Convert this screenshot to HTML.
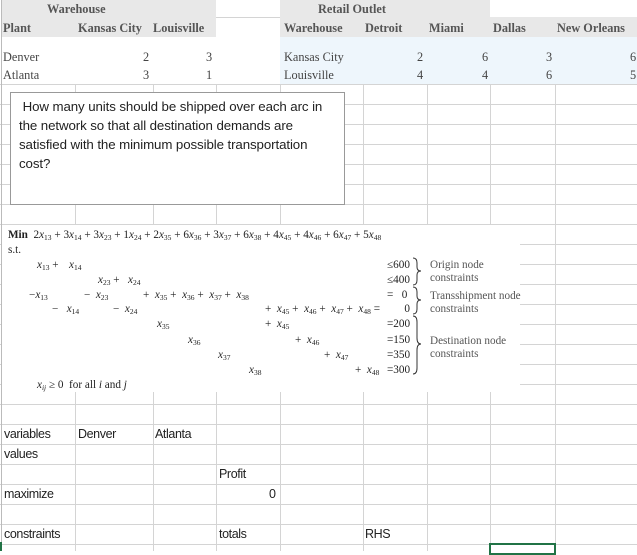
<!DOCTYPE html>
<html><head><meta charset="utf-8"><style>
*{margin:0;padding:0;box-sizing:border-box}
body{width:637px;height:551px;position:relative;overflow:hidden;background:#fff;font-family:"Liberation Sans",sans-serif}
.h{position:absolute;left:0;width:637px;height:1px;background:#d4d4d4}
.v{position:absolute;top:84px;width:1px;height:467px;background:#d4d4d4}
.t{position:absolute;white-space:nowrap}
.s{font-family:"Liberation Serif",serif;font-size:12.3px;color:#444}
.b{font-weight:bold;color:#555}
.c{font-family:"Liberation Sans",sans-serif;font-size:12.5px;letter-spacing:-0.4px;color:#222}
.m{position:absolute;white-space:nowrap;font-family:"Liberation Serif",serif;font-size:11.2px;color:#222;line-height:12px}
.m i{font-style:italic}
.m sub{font-size:7.5px;vertical-align:-2px}
</style></head><body>
<div class="h" style="top:84px"></div><div class="h" style="top:104px"></div><div class="h" style="top:124px"></div><div class="h" style="top:144px"></div><div class="h" style="top:164px"></div><div class="h" style="top:184px"></div><div class="h" style="top:204px"></div><div class="h" style="top:224px"></div><div class="h" style="top:244px"></div><div class="h" style="top:264px"></div><div class="h" style="top:284px"></div><div class="h" style="top:304px"></div><div class="h" style="top:324px"></div><div class="h" style="top:344px"></div><div class="h" style="top:364px"></div><div class="h" style="top:384px"></div><div class="h" style="top:404px"></div><div class="h" style="top:424px"></div><div class="h" style="top:444px"></div><div class="h" style="top:464px"></div><div class="h" style="top:484px"></div><div class="h" style="top:504px"></div><div class="h" style="top:524px"></div><div class="h" style="top:544px"></div>
<div class="v" style="left:75px"></div><div class="v" style="left:153px"></div><div class="v" style="left:216px"></div><div class="v" style="left:280px"></div><div class="v" style="left:363px"></div><div class="v" style="left:427px"></div><div class="v" style="left:490px"></div><div class="v" style="left:555px"></div>
<div style="position:absolute;left:1px;top:0;width:1px;height:551px;background:#bbb"></div>
<div style="position:absolute;left:2px;top:0;width:214px;height:37px;background:#e8e8e8"></div>
<div style="position:absolute;left:216px;top:17px;width:64px;height:1px;background:#d4d4d4"></div>
<div style="position:absolute;left:490px;top:17px;width:147px;height:1px;background:#d4d4d4"></div>
<div style="position:absolute;left:280px;top:0;width:210px;height:17px;background:#e8e8e8"></div>
<div style="position:absolute;left:280px;top:17px;width:357px;height:20px;background:#e8e8e8"></div>
<div style="position:absolute;left:280px;top:37px;width:357px;height:47px;background:#eef6fc"></div>
<div class="t s b" style="left:47px;top:2px">Warehouse</div>
<div class="t s b" style="left:3px;top:21px">Plant</div>
<div class="t s b" style="left:78px;top:21px">Kansas City</div>
<div class="t s b" style="left:153px;top:21px">Louisville</div>
<div class="t s b" style="left:318px;top:2px">Retail Outlet</div>
<div class="t s b" style="left:284px;top:21px">Warehouse</div>
<div class="t s b" style="left:365px;top:21px">Detroit</div>
<div class="t s b" style="left:429px;top:21px">Miami</div>
<div class="t s b" style="left:493px;top:21px">Dallas</div>
<div class="t s b" style="left:557px;top:21px">New Orleans</div>
<div class="t s" style="left:3px;top:50px">Denver</div>
<div class="t s" style="left:3px;top:68px">Atlanta</div>
<div class="t s" style="left:143px;top:50px">2</div><div class="t s" style="left:206px;top:50px">3</div>
<div class="t s" style="left:143px;top:68px">3</div><div class="t s" style="left:206px;top:68px">1</div>
<div class="t s" style="left:284px;top:50px">Kansas City</div>
<div class="t s" style="left:284px;top:68px">Louisville</div>
<div class="t s" style="left:417px;top:50px">2</div><div class="t s" style="left:482px;top:50px">6</div><div class="t s" style="left:546px;top:50px">3</div><div class="t s" style="left:630px;top:50px">6</div>
<div class="t s" style="left:417px;top:68px">4</div><div class="t s" style="left:482px;top:68px">4</div><div class="t s" style="left:546px;top:68px">6</div><div class="t s" style="left:630px;top:68px">5</div>
<div style="position:absolute;left:10px;top:92px;width:335px;height:113px;background:#fff;border:1px solid #999;padding:4px 0 0 8px;font-size:13.3px;letter-spacing:-0.1px;line-height:19px;color:#222;white-space:nowrap">&nbsp;How many units should be shipped over each arc in<br>the network so that all destination demands are<br>satisfied with the minimum possible transportation<br>cost?</div>
<div style="position:absolute;left:2px;top:225px;width:518px;height:167px;background:#fff"></div>
<div class="m" style="left:8px;top:229px"><b>Min</b>&nbsp; 2<i>x</i><sub>13</sub> + 3<i>x</i><sub>14</sub> + 3<i>x</i><sub>23</sub> + 1<i>x</i><sub>24</sub> + 2<i>x</i><sub>35</sub> + 6<i>x</i><sub>36</sub> + 3<i>x</i><sub>37</sub> + 6<i>x</i><sub>38</sub> + 4<i>x</i><sub>45</sub> + 4<i>x</i><sub>46</sub> + 6<i>x</i><sub>47</sub> + 5<i>x</i><sub>48</sub></div>
<div class="m" style="left:8px;top:244px">s.t.</div>
<div class="m" style="left:37px;top:259px"><i>x</i><sub>13</sub> +</div><div class="m" style="left:69px;top:259px"><i>x</i><sub>14</sub></div>
<div class="m" style="left:98px;top:274px"><i>x</i><sub>23</sub> +</div><div class="m" style="left:128px;top:274px"><i>x</i><sub>24</sub></div>
<div class="m" style="left:29px;top:289px">&minus;<i>x</i><sub>13</sub></div><div class="m" style="left:84px;top:289px">&minus;&nbsp; <i>x</i><sub>23</sub></div>
<div class="m" style="left:143px;top:289px">+ &nbsp;<i>x</i><sub>35</sub> + &nbsp;<i>x</i><sub>36</sub> + &nbsp;<i>x</i><sub>37</sub> + &nbsp;<i>x</i><sub>38</sub></div>
<div class="m" style="left:52px;top:303px">&minus;&nbsp; &nbsp;<i>x</i><sub>14</sub></div><div class="m" style="left:113px;top:303px">&minus;&nbsp; <i>x</i><sub>24</sub></div>
<div class="m" style="left:265px;top:303px">+ &nbsp;<i>x</i><sub>45</sub> + &nbsp;<i>x</i><sub>46</sub> + &nbsp;<i>x</i><sub>47</sub> + &nbsp;<i>x</i><sub>48</sub> =</div>
<div class="m" style="left:157px;top:318px"><i>x</i><sub>35</sub></div><div class="m" style="left:265px;top:318px">+ &nbsp;<i>x</i><sub>45</sub></div>
<div class="m" style="left:188px;top:334px"><i>x</i><sub>36</sub></div><div class="m" style="left:295px;top:334px">+ &nbsp;<i>x</i><sub>46</sub></div>
<div class="m" style="left:218px;top:349px"><i>x</i><sub>37</sub></div><div class="m" style="left:324px;top:349px">+ &nbsp;<i>x</i><sub>47</sub></div>
<div class="m" style="left:249px;top:364px"><i>x</i><sub>38</sub></div><div class="m" style="left:355px;top:364px">+ &nbsp;<i>x</i><sub>48</sub></div>
<div class="m" style="left:387px;top:259px">&le;600</div><div class="m" style="left:387px;top:274px">&le;400</div>
<div class="m" style="left:387px;top:289px">= &nbsp; 0</div><div class="m" style="left:396px;top:303px">&nbsp; &nbsp;0</div>
<div class="m" style="left:387px;top:318px">=200</div><div class="m" style="left:387px;top:334px">=150</div><div class="m" style="left:387px;top:349px">=350</div><div class="m" style="left:387px;top:364px">=300</div>
<svg style="position:absolute;left:411px;top:256px" width="16" height="122" fill="none" stroke="#333" stroke-width="1">
<path d="M2 2 Q6 2 6 7 L6 11 Q6 15 10 15 Q6 15 6 19 L6 24 Q6 29 2 29"/>
<path d="M2 31 Q6 31 6 36 L6 40 Q6 44 10 44 Q6 44 6 48 L6 53 Q6 58 2 58"/>
<path d="M2 60 Q6 60 6 66 L6 82 Q6 88 10 88 Q6 88 6 94 L6 112 Q6 118 2 118"/>
</svg>
<div class="m" style="left:430px;top:259px;color:#555">Origin node</div><div class="m" style="left:430px;top:272px;color:#555">constraints</div>
<div class="m" style="left:430px;top:290px;color:#555">Transshipment node</div><div class="m" style="left:430px;top:303px;color:#555">constraints</div>
<div class="m" style="left:430px;top:335px;color:#555">Destination node</div><div class="m" style="left:430px;top:348px;color:#555">constraints</div>
<div class="m" style="left:37px;top:379px"><i>x<sub>ij</sub></i> &ge; 0&nbsp; for all <i>i</i> and <i>j</i></div>
<div class="t c" style="left:4px;top:427px">variables</div>
<div class="t c" style="left:78px;top:427px">Denver</div>
<div class="t c" style="left:155px;top:427px">Atlanta</div>
<div class="t c" style="left:4px;top:447px">values</div>
<div class="t c" style="left:219px;top:467px">Profit</div>
<div class="t c" style="left:4px;top:487px">maximize</div>
<div class="t c" style="left:269px;top:487px">0</div>
<div class="t c" style="left:4px;top:527px">constraints</div>
<div class="t c" style="left:219px;top:527px">totals</div>
<div class="t c" style="left:365px;top:527px">RHS</div>
<div style="position:absolute;left:489px;top:543px;width:67px;height:12px;border:2px solid #217346"></div>
<div style="position:absolute;left:0;top:542px;width:2px;height:9px;background:#217346"></div>
</body></html>
